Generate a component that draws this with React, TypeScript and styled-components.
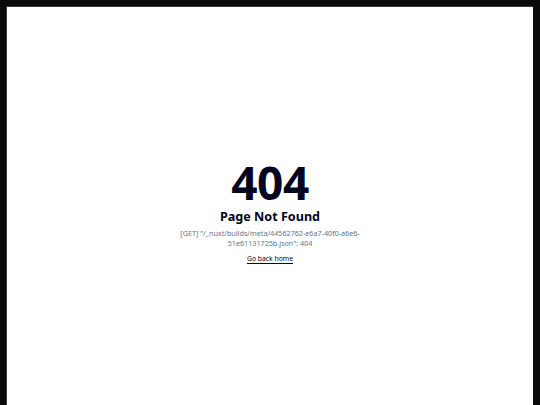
import React from "react";
import styled, { createGlobalStyle } from "styled-components";

const GlobalStyle = createGlobalStyle`
  html, body {
    margin: 0;
    padding: 0;
    background: #0a0a0a;
  }
  body {
    font-family: "Noto Sans", "Liberation Sans", sans-serif;
  }
`;

const Frame = styled.div`
  height: 405px;
  padding: 6px 7px 0 6px;
  box-sizing: border-box;
  background: #0a0a0a;
  display: flex;
`;

const Page = styled.main`
  flex: 1;
  background: #fff;
  border-top: 1px solid #3a3a3a;
  border-left: 1px solid #3a3a3a;
  display: flex;
  flex-direction: column;
  align-items: center;
  justify-content: center;
  padding-top: 8px;
  color: #020420;
`;

const Code = styled.h1`
  margin: 0;
  font-size: 46px;
  font-weight: 700;
  line-height: 50px;
  letter-spacing: -0.5px;
`;

const Title = styled.h2`
  margin: 2px 0 0;
  font-size: 12.6px;
  font-weight: 700;
  line-height: 1.2;
`;

const Message = styled.p`
  margin: 3px 0 0;
  max-width: 182px;
  text-align: center;
  font-size: 7.2px;
  line-height: 10px;
  color: #64748b;
`;

const HomeLink = styled.a`
  margin-top: 6px;
  font-size: 6.8px;
  line-height: 9px;
  color: #020420;
  text-decoration: underline;
  text-underline-offset: 2px;
  text-decoration-color: #020420;
`;

export default function App() {
  return (
    <>
      <GlobalStyle />
      <Frame>
        <Page>
          <Code>404</Code>
          <Title>Page Not Found</Title>
          <Message>
            [GET] "/_nuxt/builds/meta/44562762-e6a7-40f0-a6e6-51e61131725b.json": 404
          </Message>
          <HomeLink href="#">Go back home</HomeLink>
        </Page>
      </Frame>
    </>
  );
}
